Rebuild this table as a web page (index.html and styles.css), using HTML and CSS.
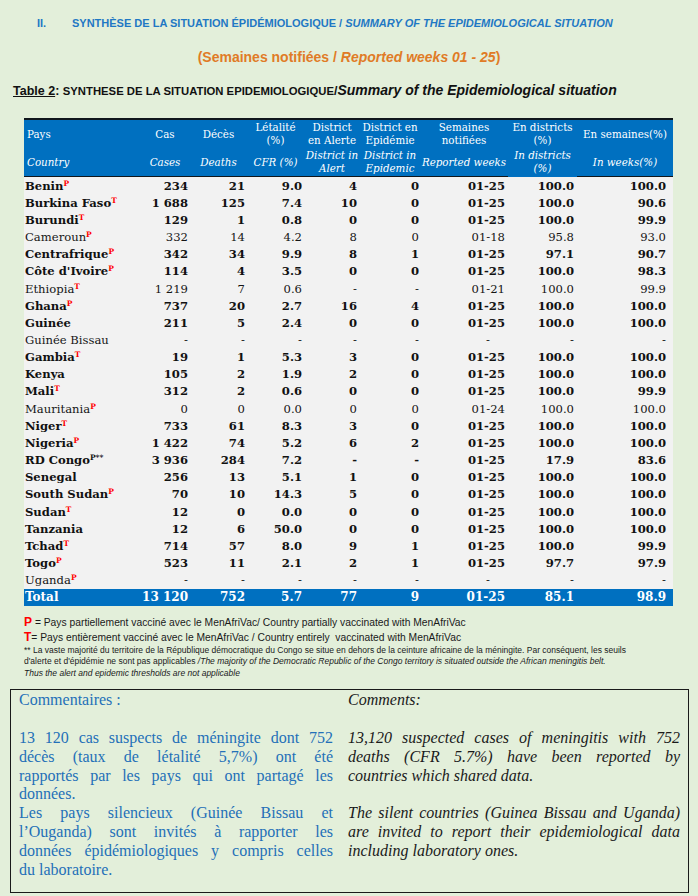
FILE: index.html
```html
<!DOCTYPE html>
<html lang="fr">
<head>
<meta charset="utf-8">
<title>Synthèse de la situation épidémiologique</title>
<link rel="stylesheet" href="styles.css">
</head>
<body>
<div class="page">
  <h2 class="sec"><span class="num">II.</span><span>SYNTHÈSE DE LA SITUATION ÉPIDÉMIOLOGIQUE / <i>SUMMARY OF THE EPIDEMIOLOGICAL SITUATION</i></span></h2>
  <p class="weeks">(Semaines notifiées / <i>Reported weeks 01 - 25</i>)</p>
  <p class="caption"><u>Table 2</u>: <span class="caps">SYNTHESE DE LA SITUATION EPIDEMIOLOGIQUE</span>/<i>Summary of the Epidemiological situation</i></p>

  <table class="data">
    <colgroup>
      <col class="c-pays"><col class="c-cas"><col class="c-dec"><col class="c-let"><col class="c-ale"><col class="c-epi"><col class="c-sem"><col class="c-idi"><col class="c-iwe">
    </colgroup>
    <thead>
      <tr class="fr">
        <th class="left">Pays</th><th>Cas</th><th>Décès</th><th>Létalité<br>(%)</th><th>District<br>en Alerte</th><th>District en<br>Epidémie</th><th>Semaines<br>notifiées</th><th>En districts<br>(%)</th><th>En semaines(%)</th>
      </tr>
      <tr class="en">
        <th class="left">Country</th><th>Cases</th><th>Deaths</th><th>CFR (%)</th><th>District in<br>Alert</th><th>District in<br>Epidemic</th><th>Reported weeks</th><th class="nob">In districts<br>(%)</th><th>In weeks(%)</th>
      </tr>
    </thead>
    <tbody>
      <tr class="b"><td class="c">Benin<sup>P</sup></td><td>234</td><td>21</td><td>9.0</td><td>4</td><td>0</td><td>01-25</td><td>100.0</td><td>100.0</td></tr>
      <tr class="b"><td class="c">Burkina Faso<sup>T</sup></td><td>1 688</td><td>125</td><td>7.4</td><td>10</td><td>0</td><td>01-25</td><td>100.0</td><td>90.6</td></tr>
      <tr class="b"><td class="c">Burundi<sup>T</sup></td><td>129</td><td>1</td><td>0.8</td><td>0</td><td>0</td><td>01-25</td><td>100.0</td><td>99.9</td></tr>
      <tr><td class="c">Cameroun<sup>P</sup></td><td>332</td><td>14</td><td>4.2</td><td>8</td><td>0</td><td>01-18</td><td>95.8</td><td>93.0</td></tr>
      <tr class="b"><td class="c">Centrafrique<sup>P</sup></td><td>342</td><td>34</td><td>9.9</td><td>8</td><td>1</td><td>01-25</td><td>97.1</td><td>90.7</td></tr>
      <tr class="b"><td class="c">Côte d'Ivoire<sup>P</sup></td><td>114</td><td>4</td><td>3.5</td><td>0</td><td>0</td><td>01-25</td><td>100.0</td><td>98.3</td></tr>
      <tr><td class="c">Ethiopia<sup>T</sup></td><td>1 219</td><td>7</td><td>0.6</td><td>-</td><td>-</td><td>01-21</td><td>100.0</td><td>99.9</td></tr>
      <tr class="b"><td class="c">Ghana<sup>P</sup></td><td>737</td><td>20</td><td>2.7</td><td>16</td><td>4</td><td>01-25</td><td>100.0</td><td>100.0</td></tr>
      <tr class="b"><td class="c">Guinée</td><td>211</td><td>5</td><td>2.4</td><td>0</td><td>0</td><td>01-25</td><td>100.0</td><td>100.0</td></tr>
      <tr><td class="c">Guinée Bissau</td><td>-</td><td>-</td><td>-</td><td>-</td><td>-</td><td class="dash">-</td><td>-</td><td>-</td></tr>
      <tr class="b"><td class="c">Gambia<sup>T</sup></td><td>19</td><td>1</td><td>5.3</td><td>3</td><td>0</td><td>01-25</td><td>100.0</td><td>100.0</td></tr>
      <tr class="b"><td class="c">Kenya</td><td>105</td><td>2</td><td>1.9</td><td>2</td><td>0</td><td>01-25</td><td>100.0</td><td>100.0</td></tr>
      <tr class="b"><td class="c">Mali<sup>T</sup></td><td>312</td><td>2</td><td>0.6</td><td>0</td><td>0</td><td>01-25</td><td>100.0</td><td>99.9</td></tr>
      <tr><td class="c">Mauritania<sup>P</sup></td><td>0</td><td>0</td><td>0.0</td><td>0</td><td>0</td><td>01-24</td><td>100.0</td><td>100.0</td></tr>
      <tr class="b"><td class="c">Niger<sup>T</sup></td><td>733</td><td>61</td><td>8.3</td><td>3</td><td>0</td><td>01-25</td><td>100.0</td><td>100.0</td></tr>
      <tr class="b"><td class="c">Nigeria<sup>P</sup></td><td>1 422</td><td>74</td><td>5.2</td><td>6</td><td>2</td><td>01-25</td><td>100.0</td><td>100.0</td></tr>
      <tr class="b"><td class="c">RD Congo<sup class="blk">P**</sup></td><td>3 936</td><td>284</td><td>7.2</td><td>-</td><td>-</td><td>01-25</td><td>17.9</td><td>83.6</td></tr>
      <tr class="b"><td class="c">Senegal</td><td>256</td><td>13</td><td>5.1</td><td>1</td><td>0</td><td>01-25</td><td>100.0</td><td>100.0</td></tr>
      <tr class="b"><td class="c">South Sudan<sup>P</sup></td><td>70</td><td>10</td><td>14.3</td><td>5</td><td>0</td><td>01-25</td><td>100.0</td><td>100.0</td></tr>
      <tr class="b"><td class="c">Sudan<sup>T</sup></td><td>12</td><td>0</td><td>0.0</td><td>0</td><td>0</td><td>01-25</td><td>100.0</td><td>100.0</td></tr>
      <tr class="b"><td class="c">Tanzania</td><td>12</td><td>6</td><td>50.0</td><td>0</td><td>0</td><td>01-25</td><td>100.0</td><td>100.0</td></tr>
      <tr class="b"><td class="c">Tchad<sup>T</sup></td><td>714</td><td>57</td><td>8.0</td><td>9</td><td>1</td><td>01-25</td><td>100.0</td><td>99.9</td></tr>
      <tr class="b"><td class="c">Togo<sup>P</sup></td><td>523</td><td>11</td><td>2.1</td><td>2</td><td>1</td><td>01-25</td><td>97.7</td><td>97.9</td></tr>
      <tr><td class="c">Uganda<sup>P</sup></td><td>-</td><td>-</td><td>-</td><td>-</td><td>-</td><td class="dash">-</td><td>-</td><td>-</td></tr>
      <tr class="total"><td class="c">Total</td><td>13 120</td><td>752</td><td>5.7</td><td>77</td><td>9</td><td>01-25</td><td>85.1</td><td>98.9</td></tr>
    </tbody>
  </table>

  <div class="notes">
    <div class="n1"><b class="red">P</b> = Pays partiellement vacciné avec le MenAfriVac/ Country partially vaccinated with MenAfriVac</div>
    <div class="n1"><b class="red">T</b>= Pays entièrement vacciné avec le MenAfriVac / Country entirely &nbsp;vaccinated with MenAfriVac</div>
    <div class="n2">** La vaste majorité du territoire de la République démocratique du Congo se situe en dehors de la ceinture africaine de la méningite. Par conséquent, les seuils</div>
    <div class="n2">d'alerte et d'épidémie ne sont pas applicables <i>/The majority of the Democratic Republic of the Congo territory is situated outside the African meningitis belt.</i></div>
    <div class="n2"><i>Thus the alert and epidemic thresholds are not applicable</i></div>
  </div>

  <div class="comments">
    <div class="col fr-col">
      <div class="ln">Commentaires :</div>
      <div class="ln">&nbsp;</div>
      <div class="ln j">13 120 cas suspects de méningite dont 752</div>
      <div class="ln j">décès (taux de létalité 5,7%) ont été</div>
      <div class="ln j">rapportés par les pays qui ont partagé les</div>
      <div class="ln">données.</div>
      <div class="ln j">Les pays silencieux (Guinée Bissau et</div>
      <div class="ln j">l’Ouganda) sont invités à rapporter les</div>
      <div class="ln j">données épidémiologiques y compris celles</div>
      <div class="ln">du laboratoire.</div>
    </div>
    <div class="col en-col">
      <div class="ln">Comments:</div>
      <div class="ln">&nbsp;</div>
      <div class="ln j">13,120 suspected cases of meningitis with 752</div>
      <div class="ln j">deaths (CFR 5.7%) have been reported by</div>
      <div class="ln">countries which shared data.</div>
      <div class="ln">&nbsp;</div>
      <div class="ln j">The silent countries (Guinea Bissau and Uganda)</div>
      <div class="ln j">are invited to report their epidemiological data</div>
      <div class="ln">including laboratory ones.</div>
    </div>
  </div>
</div>
</body>
</html>
```

FILE: styles.css
```css
html, body {
  margin: 0;
  padding: 0;
}
body {
  background: #e3efda;
  font-family: "DejaVu Serif", serif;
  color: #111;
}
.page {
  width: 698px;
  height: 896px;
  overflow: hidden;
}
.sec {
  margin: 0;
  padding: 17px 0 0 37px;
  display: flex;
  font: bold 11px/12px "Liberation Sans", Arial, sans-serif;
  color: #1f78c4;
  white-space: nowrap;
}
.sec .num {
  width: 35px;
  flex: none;
}
.weeks {
  margin: 20px 0 0;
  text-align: center;
  font: bold 14px/16px "Liberation Sans", Arial, sans-serif;
  color: #e07b26;
}
.caption {
  margin: 16px 0 0;
  padding-left: 13px;
  font: bold 12.5px/18px "Liberation Sans", Arial, sans-serif;
  color: #111;
  white-space: nowrap;
}
.caption .caps {
  font-size: 11.3px;
}
.caption i {
  font-size: 14px;
}

/* table */
.data {
  margin: 18px 0 0 24px;
  width: 649px;
  table-layout: fixed;
  border-collapse: collapse;
  border-top: 2px solid #10161c;
}
.c-pays { width: 116px; }
.c-cas { width: 50px; }
.c-dec { width: 57px; }
.c-let { width: 57px; }
.c-ale { width: 56px; }
.c-epi { width: 60px; }
.c-sem { width: 88px; }
.c-idi { width: 69px; }
.c-iwe { width: 96px; }

.data th {
  background: #0070c0;
  color: #fff;
  font-weight: normal;
  font-size: 10.3px;
  line-height: 13px;
  text-align: center;
  vertical-align: middle;
  padding: 0;
  white-space: nowrap;
}
.data th.left {
  text-align: left;
  padding-left: 3px;
}
.data tr.fr th {
  height: 28px;
}
.data tr.en th {
  height: 28px;
  font-style: italic;
  border-bottom: 1.5px solid #10161c;
}
.data tr.en th.nob {
  border-bottom-color: #0070c0;
}
.data td {
  height: 17.17px;
  padding: 0 2px 0 0;
  font-size: 11.6px;
  line-height: 14px;
  text-align: right;
  background: #f2f2f2;
  white-space: nowrap;
  color: #151515;
}
.data tr.b td {
  font-weight: bold;
  color: #111;
}
.data td.c {
  text-align: left;
  padding-left: 1px;
}
.data td:nth-child(5) { padding-right: 3px; }
.data td:nth-child(6) { padding-right: 1px; }
.data td:nth-child(7) { padding-right: 3px; }
.data td:nth-child(8) { padding-right: 3px; }
.data td:nth-child(9) { padding-right: 7px; }
.data td.dash { padding-right: 18px; }
.data sup {
  color: #ff0000;
  font-weight: bold;
  font-size: 7.5px;
  line-height: 0;
  vertical-align: 4px;
}
.data sup.blk {
  color: #111;
}
.data tr.total td {
  background: #0070c0;
  color: #fff;
  font-weight: bold;
  font-size: 12px;
}

/* notes */
.notes {
  margin-top: 9px;
  padding-left: 24px;
  font-family: "Liberation Sans", Arial, sans-serif;
  color: #1a1a1a;
  white-space: nowrap;
}
.notes .n1 {
  font-size: 10.3px;
  line-height: 14px;
}
.notes .n1 .red {
  color: #ff0000;
  font-size: 12px;
}
.notes .n2 {
  font-size: 8.5px;
  line-height: 11.5px;
}

/* comments */
.comments {
  margin: 10px 9px 0 10px;
  border: 1.5px solid #1a1a1a;
  padding: 1px 8px 13px 8px;
  display: flex;
  gap: 15px;
  font-family: "Liberation Serif", "Times New Roman", serif;
  font-size: 16px;
  line-height: 18.8px;
}
.comments .col {
  white-space: nowrap;
}
.fr-col {
  width: 314px;
  color: #2370b8;
}
.en-col {
  width: 332px;
  font-style: italic;
  color: #1a1a1a;
}
.ln.j {
  text-align: justify;
  text-align-last: justify;
  white-space: normal;
}
```
